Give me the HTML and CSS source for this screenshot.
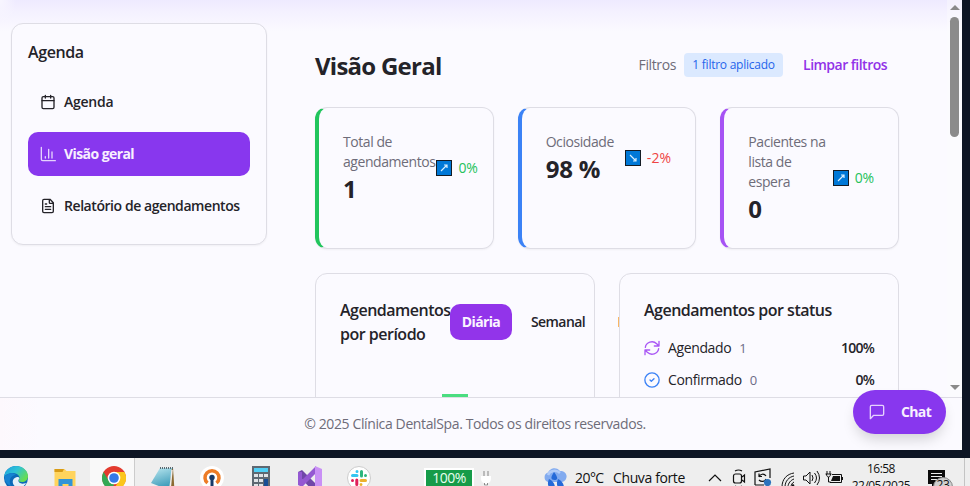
FILE: index.html
```html
<!DOCTYPE html>
<html lang="pt-BR">
<head>
<meta charset="utf-8">
<title>Visão Geral</title>
<link rel="stylesheet" href="styles.css">
</head>
<body>
<div class="desktop">
  <div class="window">
    <div class="viewport">
      <aside class="sidebar">
        <h2>Agenda</h2>
        <nav>
          <a class="nav-item"><svg class="icon" viewBox="0 0 24 24"><path d="M8 2v4M16 2v4M3 10h18"/><rect x="3" y="4" width="18" height="18" rx="2"/></svg>Agenda</a>
          <a class="nav-item active"><svg class="icon" viewBox="0 0 24 24"><path d="M2 2v18a2 2 0 0 0 2 2h19M8 18v-2M13 18V5M18 18V9"/></svg>Visão geral</a>
          <a class="nav-item"><svg class="icon" viewBox="0 0 24 24"><path d="M15 2H6a2 2 0 0 0-2 2v16a2 2 0 0 0 2 2h12a2 2 0 0 0 2-2V7ZM14 2v5a1 1 0 0 0 1 1h5M10 9H8M16 13H8M16 17H8"/></svg>Relatório de agendamentos</a>
        </nav>
      </aside>
      <main class="main">
        <header class="page-head">
          <h1>Visão Geral</h1>
          <div class="filters"><span>Filtros</span><span class="badge">1 filtro aplicado</span><a>Limpar filtros</a></div>
        </header>
        <section class="kpis">
          <article class="kpi green">
            <div><p class="label">Total de agendamentos</p><p class="value">1</p></div>
            <div class="trend up"><svg viewBox="0 0 16 16"><rect x=".5" y=".5" width="15" height="15"/><path d="M5 11l5.500-5.500M8 5h3v3"/></svg>0%</div>
          </article>
          <article class="kpi blue">
            <div><p class="label">Ociosidade</p><p class="value">98 %</p></div>
            <div class="trend down"><svg viewBox="0 0 16 16"><rect x=".5" y=".5" width="15" height="15"/><path d="M5 5l5.500 5.500M8 11h3v-3"/></svg>-2%</div>
          </article>
          <article class="kpi purple">
            <div><p class="label">Pacientes na lista de espera</p><p class="value">0</p></div>
            <div class="trend up"><svg viewBox="0 0 16 16"><rect x=".5" y=".5" width="15" height="15"/><path d="M5 11l5.500-5.500M8 5h3v3"/></svg>0%</div>
          </article>
        </section>
        <section class="panels">
          <article class="panel">
            <div class="period-head">
              <h3>Agendamentos por período</h3>
              <div class="tabs"><span class="tab selected">Diária</span><span class="tab">Semanal</span><i class="tab-edge"></i></div>
            </div>
            <div class="chart"><i class="bar"></i></div>
          </article>
          <article class="panel">
            <h3 class="status-title">Agendamentos por status</h3>
            <div class="status"><svg class="icon violet" viewBox="0 0 24 24"><path d="M2 11a10 9.500 0 0 1 17-5.500L22.500 9M22.500 2v7h-7M22 13a10 9.500 0 0 1-17 5.500L1.500 15M8.500 15h-7v7"/></svg><span>Agendado</span><small>1</small><b>100%</b></div>
            <div class="status"><svg class="icon azure" viewBox="0 0 24 24"><circle cx="12" cy="12" r="10.700"/><path d="m9 12 2 2 4-4"/></svg><span>Confirmado</span><small>0</small><b>0%</b></div>
          </article>
        </section>
      </main>
      <div class="scrollbar"><i class="arrow-up"></i><i class="thumb"></i><i class="arrow-down"></i></div>
    </div>
    <footer class="footer">© 2025 Clínica DentalSpa. Todos os direitos reservados.</footer>
    <a class="chat"><svg class="icon" viewBox="0 0 24 24"><path d="M22 15a2 2 0 0 1-2 2H7l-5 5V4a2 2 0 0 1 2-2h16a2 2 0 0 1 2 2z"/></svg>Chat</a>
  </div>

  <div class="taskbar">
    <div class="apps">
      <span class="app"><svg viewBox="0 0 24 24"><defs><linearGradient id="eg" x2="1" y2=".6"><stop stop-color="#1a9fe0"/><stop offset=".5" stop-color="#2fc3d6"/><stop offset="1" stop-color="#68dd50"/></linearGradient></defs><circle cx="12" cy="12" r="12" fill="#0c69b8"/><path d="M0 11C1 4 6 0 12 0c7 0 12 5 12 10 0 4-3 6-6 6-3 0-4-1-3-2 2-3-1-7-6-7-4 0-7 1-9 4Z" fill="url(#eg)"/><path d="M15 13c-2 3 1 6 7 4-2 4-6 6-10 4-5-3-4-9 1-10 2 0 3 1 2 2Z" fill="#e4f1fa"/><path d="M1 10c3-3 8-4 11-1-5 0-8 5-5 11C2 18 0 14 1 10Z" fill="#1683d2"/></svg></span>
      <span class="app"><svg viewBox="0 0 24 24"><path d="M1.500 3h10l2 2h9v17h-21Z" fill="#ffd45d"/><path d="M1.500 3h9.500l-1.500 3h-8Z" fill="#d89b16"/><path d="M5.500 13h14v10h-4v-5H9.500v5h-4Z" fill="#3294d7"/></svg></span>
      <span class="app open"><svg viewBox="0 0 24 24"><circle cx="12" cy="12" r="12" fill="#e33b2e"/><path d="M1.600 6 7 15l5 3-1.500 6A12 12 0 0 1 1.600 6Z" fill="#34a853"/><path d="M12 6h10.400A12 12 0 0 1 11 24l6-9Z" fill="#fbc61c"/><circle cx="12" cy="12" r="6.300" fill="#fff"/><circle cx="12" cy="12" r="4.800" fill="#3479e8"/></svg></span>
      <span class="app"><svg viewBox="0 0 24 24"><defs><linearGradient id="ng" x2=".3" y2="1"><stop stop-color="#bce8f0"/><stop offset="1" stop-color="#3b9ab8"/></linearGradient></defs><path d="M19 2h3l1.500 22h-5Z" fill="#8c6a32"/><path d="M9 2h12l-3 22L0 17Z" fill="url(#ng)"/><path d="M9 2h13" stroke="#596a72" stroke-width="2" stroke-dasharray="1 1"/><path d="M21 4l-2 20" stroke="#eee" stroke-width="1.500"/></svg></span>
      <span class="app"><svg viewBox="0 0 24 24"><circle cx="12" cy="12" r="12" fill="#fff"/><path d="M7.500 17a7 7 0 1 1 9 0" fill="none" stroke="#ed7c26" stroke-width="3.500"/><circle cx="12" cy="11.500" r="2.700" fill="#183967"/><path d="M10.500 12h3v9h-3Z" fill="#183967"/></svg></span>
      <span class="app"><svg viewBox="0 0 24 24"><rect x="3" width="18" height="25" fill="#5e6872"/><rect x="5" y="2" width="14" height="4" fill="#50cff5"/><path d="M5 8h4v3H5ZM10 8h4v3h-4ZM15 8h4v3h-4ZM5 13h4v3H5ZM10 13h4v3h-4ZM5 18h4v3H5ZM10 18h4v3h-4Z" fill="#e0e3e7"/><path d="M15 13h4v8h-4Z" fill="#174d94"/></svg></span>
      <span class="app"><svg viewBox="0 0 24 24"><path d="M0 6l4-2 14 14v6h-4L0 9Z" fill="#7047a8"/><path d="M0 6v13l4 2L18 7V0L4 14V6Z" fill="#9458d2"/><path d="M17 0l7 3v21h-7Z" fill="#c990f5"/></svg></span>
      <span class="app"><svg viewBox="0 0 24 24"><circle cx="12" cy="12" r="11.500" fill="#fff" stroke="#ccc"/><g fill="none" stroke-width="3" stroke-linecap="round"><path d="M5.500 9.500H10M10 5.500v.01" stroke="#36c5f0"/><path d="M14.500 5.500V10M18.500 9.500v.01" stroke="#2eb67d"/><path d="M9.800 14v4.500M5.500 14.500v.01" stroke="#e01e5a"/><path d="M14 14.500h4.500M14 18.500v.01" stroke="#ecb22e"/></g></svg></span>
    </div>
    <div class="battery">100%</div>
    <svg class="plug" viewBox="0 0 12 16"><path d="M4 0v5M8 0v5" stroke="#888" stroke-width="1"/><path d="M1 5h10v2c0 5-3 5-4 5v4H5v-4C4 12 1 12 1 7Z" fill="#fff"/><path d="M4.500 12v2h3v-2" fill="none" stroke="#666" stroke-width=".7"/></svg>
    <div class="weather"><svg viewBox="0 0 24 20"><path d="M5 14a5 5 0 0 1 0-9.500A7 7 0 0 1 17 3a5.500 5.500 0 0 1 2 11Z" fill="#82abef"/><path d="M5 7a7 6 0 0 1 12-2" fill="none" stroke="#b0cbf8" stroke-width="2.500"/><path d="M11 4c-4 6-3 8 .5 8s4-2-.5-8ZM6 11c4 2 6 5 6 9H6.500c-2-3-2-5-.5-9ZM15 11c4 2 6 5 6 9h-5.500c-2-3-2-5-.5-9Z" fill="#2469d8"/></svg><span class="temp">20°C</span><span>Chuva forte</span></div>
    <svg class="tray" viewBox="0 0 152 20" fill="none" stroke="#111" stroke-width="1.200">
      <path d="M1 13l6-6 6 6"/>
      <rect x="25.500" y="6" width="8" height="9" rx="2"/><path d="M34 9l2.500-2v7l-2.500-2M27 3q3.500-2 7 0M27 18q3.500 2 7 0"/>
      <path d="M47 17V4l15-3v9M47 17h9M58 8c-2-3-6-2-7 1M51 5.500v3h3M51 12c2 2 6 2 7-1"/><circle cx="59.500" cy="14.500" r="3.600" fill="#2b73bd" stroke="none"/>
      <g transform="translate(72 1)"><path d="M2 18C2 10 7 5 14 4M5 18c0-6 4-10 9-11M8 18c0-4 3-7 6-8M11 18c0-2 1-4 3-5" stroke-width="1"/><circle cx="13" cy="16.500" r="1.300" fill="#111" stroke="none"/></g>
      <path d="M95.500 8h2.500l4-4v12l-4-4h-2.500ZM104 7q2 3 0 6M106.500 5q4 5 0 10M109 3q5 7 0 14" stroke-width="1"/>
      <path d="M124 6.500h9.500v8H122M134.500 9v3" stroke-width="1"/><path d="M125 8h7v5h-9Z" fill="#111" stroke="none"/><path d="M119 3v3M122 3v3M117.500 6h6M118.500 6c0 4 4 4 4 0M120.500 9v5h2" stroke-width="1"/>
    </svg>
    <div class="clock"><span>16:58</span><span>22/05/2025</span></div>
    <div class="notice"><svg viewBox="0 0 18 18"><path d="M0 0h17v14H8l-4 4v-4H0Z" fill="#0c0c0c"/><path d="M3 3.500h11M3 6.500h11M3 9.500h7" stroke="#eee"/></svg><span>23</span></div>
    <i class="peek"></i>
  </div>
</div>
</body>
</html>
```
FILE: styles.css
```css
* { box-sizing: border-box; }
body { margin: 0; font: 14px/20px "Open Sans", "Noto Sans", sans-serif; letter-spacing: -.027em; color: #242329; }
h1, h2, h3, p { margin: 0; }
.desktop { display: flex; flex-direction: column; width: 970px; height: 486px; overflow: hidden; background: #0d1524; }
.window { position: relative; display: flex; flex-direction: column; width: 962px; height: 450px; margin-bottom: 8px; background: linear-gradient(90deg, #fdf8fd, #fbfaff 40px); }
.viewport { position: relative; display: flex; align-items: flex-start; height: 397px; padding-left: 11px; overflow: hidden; background: radial-gradient(ellipse 16px 25px at 0 0, #f8f6ff, transparent), linear-gradient(#eeeaff, #f4f1ff 12px, #fbfaff 32px); }
.icon { flex: none; width: 16px; height: 16px; fill: none; stroke: currentColor; stroke-width: 2; stroke-linecap: round; stroke-linejoin: round; }

.sidebar { width: 256px; height: 222px; margin-top: 23px; padding: 16px; border: 1px solid #dedde5; border-radius: 12px; box-shadow: 0 1px 2px #0000000c; background: #fbfaff; }
.sidebar h2 { font-size: 16px; line-height: 24px; font-weight: 600; letter-spacing: -.025em; }
.sidebar nav { display: flex; flex-direction: column; gap: 8px; width: 222px; margin-top: 16px; }
.nav-item { display: flex; align-items: center; gap: 8px; height: 44px; padding: 0 12px; border-radius: 10px; font-weight: 600; letter-spacing: -.031em; white-space: nowrap; }
.nav-item:first-child { letter-spacing: -.018em; }
.nav-item.active { background: #8837ee; color: #f8efff; font-weight: 700; letter-spacing: -.041em; }
.active .icon { color: #e5d2fd; }

.main { width: 584px; margin-left: 48px; }
.page-head { display: flex; justify-content: space-between; align-items: center; height: 36px; margin-top: 48px; padding-right: 12px; }
h1 { font-size: 24px; line-height: 32px; font-weight: 700; letter-spacing: -.031em; }
.filters { display: flex; align-items: center; margin-top: -2px; color: #6e6c79; white-space: nowrap; }
.badge { width: 99px; margin: 0 20px 0 8px; border-radius: 4px; background: #dbe9ff; color: #2564eb; font-size: 12px; line-height: 24px; letter-spacing: -.021em; text-align: center; }
.filters a { color: #9132e8; font-weight: 600; letter-spacing: -.037em; }

.kpis { display: grid; grid-template-columns: repeat(3, minmax(0, 1fr)); gap: 24px; margin-top: 23px; }
.kpi { display: flex; justify-content: space-between; height: 142px; padding: 24px 15px 0 24px; border: 1px solid #dedde5; border-left-width: 4px; border-radius: 12px; box-shadow: 0 1px 2px #0000000c; }
.green { border-left-color: #21c55d; }
.blue { border-left-color: #3b82f6; padding-right: 24px; }
.purple { border-left-color: #a653f4; padding-right: 24px; }
.kpi > div:first-child { flex: none; width: 93px; }
.label { color: #6e6c79; letter-spacing: -.031em; }
.kpi.blue > div:first-child { width: 72px; }
.kpi.purple > div:first-child { width: 80px; }
.value { font-size: 24px; line-height: 34px; font-weight: 700; letter-spacing: -.008em; white-space: nowrap; }
.trend { display: flex; align-items: center; gap: 6px; align-self: flex-start; height: 20px; font-weight: 500; letter-spacing: -.015em; }
.trend svg { width: 16px; height: 16px; stroke: #141c25; fill: #0078d7; }
.trend path { stroke: #d7efff; stroke-width: 1.200; fill: none; }
.up { color: #25c25c; }
.down { color: #ef4444; letter-spacing: .01em; }
.green .trend { margin-top: 26px; }
.blue .trend { margin-top: 16px; }
.purple .trend { margin-top: 36px; }

.panels { display: grid; grid-template-columns: 280px 280px; gap: 24px; margin-top: 24px; }
.panel { height: 360px; padding: 24px; border: 1px solid #dedde5; border-radius: 12px; }
.panel h3 { font-size: 16px; line-height: 24px; font-weight: 600; letter-spacing: -.031em; }
.period-head { display: flex; align-items: center; }
.period-head h3 { flex: none; width: 110px; }
.tabs { display: flex; flex: none; align-items: center; }
.tab { padding: 0 12px; border-radius: 10px; line-height: 36px; font-weight: 600; letter-spacing: -.042em; }
.tab:nth-child(2) { width: 78px; margin-left: 7px; }
.tab.selected { width: 62px; background: #9234ea; color: #fbf4ff; font-weight: 700; text-align: center; padding: 0; letter-spacing: -.045em; }
.tab-edge { width: 1px; height: 10px; margin-left: 21px; background: #f9b665; }
.chart { display: flex; padding: 48px 0 0 102px; }
.bar { width: 26px; height: 200px; background: #4add80; }
.status { display: flex; align-items: center; gap: 8px; height: 32px; }
.status-title { margin-bottom: 10px; }
.status small { font-size: 13px; color: #6d6b87; }
.status b { margin-left: auto; font-weight: 600; letter-spacing: -.055em; }
.status .icon { stroke-width: 2; }
.violet { color: #a957f5; }
.azure { color: #3b82f6; }

.scrollbar { position: absolute; right: 0; top: 0; width: 15px; height: 397px; display: flex; flex-direction: column; align-items: center; background: #fcfcfd66; }
.arrow-up { margin-top: 5px; border: 5px solid transparent; border-top: 0; border-bottom-color: #8a8a8a; }
.thumb { width: 9px; height: 120px; margin-top: 7px; border-radius: 5px; background: #8b8b8b; }
.arrow-down { margin-top: auto; margin-bottom: 7px; border: 5px solid transparent; border-bottom: 0; border-top-color: #8a8a8a; }
.footer { height: 53px; padding-right: 12px; border-top: 1px solid #dedde5; line-height: 52px; text-align: center; color: #6e6c79; }
.chat { position: absolute; right: 16px; bottom: 16px; display: flex; align-items: center; width: 93px; height: 44px; padding-left: 16px; gap: 16px; border-radius: 22px; background: #8837ee; color: #f8efff; font-weight: 700; letter-spacing: -.045em; box-shadow: 0 8px 14px -3px #0000002b; }
.chat .icon { color: #e5d2fd; }

.taskbar { display: flex; align-items: flex-start; flex: none; height: 28px; overflow: hidden; background: #eeeeee; color: #111; white-space: nowrap; }
.apps { display: flex; flex: none; margin-left: -8px; }
.app { width: 49px; height: 28px; padding: 8px 0 0 12px; }
.app svg { display: block; width: 24px; height: 24px; }
.app.open { background: #f9f9f9; width: 45px; margin-right: 4px; border-right: 1px solid #ccc; }
.battery { flex: none; width: 50px; height: 25px; margin: 10px 0 0 40px; border: 2px solid #fff; background: #169b49; color: #e9fff0; line-height: 16px; font-size: 14px; letter-spacing: -.035em; text-align: center; }
.plug { flex: none; width: 12px; height: 16px; margin: 13px 0 0 6px; }
.weather { display: flex; flex: none; align-items: center; height: 20px; margin: 10px 0 0 51px; }
.weather svg { width: 24px; height: 20px; margin-right: 8px; }
.temp { width: 38px; letter-spacing: -.04em; }
.tray { flex: none; width: 152px; height: 20px; margin: 10px 0 0 23px; }
.clock { display: flex; flex: none; flex-direction: column; align-items: center; width: 64px; margin: 2px 0 0 -11px; font-size: 12px; line-height: 17px; letter-spacing: -.045em; }
.notice { position: relative; flex: none; width: 18px; height: 18px; margin: 12px 0 0 15px; }
.notice svg { display: block; width: 18px; height: 18px; }
.notice span { position: absolute; left: 5px; top: 7px; width: 20px; height: 20px; border: 1px solid #888; border-radius: 50%; background: #cfcfcf; font-size: 12px; line-height: 14px; text-align: center; }
.peek { width: 1px; height: 28px; margin-left: 18px; background: #c4c4c4; }
```
